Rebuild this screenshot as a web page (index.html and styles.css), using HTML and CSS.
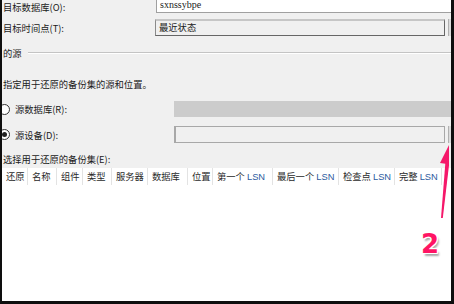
FILE: index.html
```html
<!DOCTYPE html>
<html lang="zh-CN">
  <head>
    <meta charset="UTF-8" />
    <meta name="viewport" content="width=device-width, initial-scale=1.0" />
    <title>还原数据库</title>
    <link rel="stylesheet" href="styles.css">
  </head>
  <body>
    <div class="window">
      <div class="field row-db">
        <span class="label">目标数据库(O):</span>
        <div class="input input-top">sxnssybpe</div>
      </div>
      <div class="field row-time">
        <span class="label">目标时间点(T):</span>
        <div class="input input-ro">最近状态</div>
        <div class="browse"></div>
      </div>

      <div class="group">
        <span class="group-title">的源</span>
        <span class="group-line"></span>
      </div>
      <div class="desc">指定用于还原的备份集的源和位置。</div>

      <div class="field row-src">
        <span class="radio"></span>
        <span class="label label-wide">源数据库(R):</span>
        <div class="input input-disabled"></div>
      </div>
      <div class="field row-dev">
        <span class="radio checked"></span>
        <span class="label label-wide">源设备(D):</span>
        <div class="input input-dev"></div>
        <div class="browse"></div>
      </div>

      <div class="desc pick">选择用于还原的备份集(E):</div>

      <div class="grid">
        <div class="grid-head">
          <span class="col" style="width: 26px">还原</span>
          <span class="col" style="width: 29px">名称</span>
          <span class="col" style="width: 26px">组件</span>
          <span class="col" style="width: 29px">类型</span>
          <span class="col" style="width: 36px">服务器</span>
          <span class="col" style="width: 40px">数据库</span>
          <span class="col" style="width: 25px">位置</span>
          <span class="col" style="width: 60px">第一个 <b class="lsn">LSN</b></span>
          <span class="col" style="width: 66px">最后一个 <b class="lsn">LSN</b></span>
          <span class="col" style="width: 56px">检查点 <b class="lsn">LSN</b></span>
          <span class="col" style="width: 47px">完整 <b class="lsn">LSN</b></span>
        </div>
      </div>

      <!-- annotation drawn over the dialog -->
      <svg class="arrow" width="449" height="301" viewBox="0 0 449 301">
        <polygon points="441,218 442.8,218 449.5,161 445.5,161" fill="#f5186a" />
        <polygon points="440,163 455,165 450,143" fill="#f5186a" />
      </svg>
      <span class="badge">2</span>
    </div>
  </body>
</html>
```

FILE: styles.css
```css
body {
  margin: 0;
  padding: 0;
  background-color: #0e0e0e;
  font-family: "Noto Sans CJK SC", "Noto Sans", sans-serif;
  font-size: 9.3px;
  color: #1a1a1a;
}
.window {
  position: relative;
  width: 449px;
  height: 301px;
  margin: 0 3px 3px 2px;
  padding-left: 1px;
  box-sizing: border-box;
  background-color: #f0f0f0;
  overflow: hidden;
}
.field {
  display: flex;
  align-items: center;
}
.label {
  width: 152px;
  flex: none;
  line-height: 14px;
}
.input {
  flex: 1;
  box-sizing: border-box;
  height: 100%;
  line-height: 14px;
  padding-left: 3px;
}
.row-db {
  height: 13px;
  margin-left: -1px;
  padding-left: 1px;
}
.input-top {
  margin-left: 1px;
  height: 13px;
  line-height: 9px;
  background-color: #fff;
  border-left: 1px solid #a0a0a0;
  border-bottom: 1px solid #a0a0a0;
  font-family: "Liberation Serif", serif;
  font-size: 10px;
}
.row-time {
  height: 17px;
  margin-top: 6px;
}
.input-ro {
  border-top: 2px solid #c6c6c6;
  border-left: 1px solid #8a8a8a;
  border-right: 1px solid #666;
  border-bottom: 1px solid #666;
  line-height: 13px;
}
.browse {
  width: 2px;
  height: 100%;
  margin-left: 3px;
  background-color: #dcdcdc;
  border-left: 1px solid #b0b0b0;
}
.group {
  display: flex;
  align-items: center;
  height: 14px;
  margin-top: 10px;
}
.group-title {
  line-height: 14px;
}
.group-line {
  flex: 1;
  margin-left: 6px;
  border-top: 1px solid #c4c4c4;
  border-bottom: 1px solid #fff;
}
.desc {
  height: 14px;
  line-height: 14px;
  margin-top: 17px;
}
.row-src {
  height: 16px;
  margin-top: 10px;
}
.input-disabled {
  background-color: #cccccc;
}
.row-dev {
  height: 17px;
  margin-top: 9px;
}
.input-dev {
  border: 1px solid #a8a8a8;
  border-left-width: 2px;
}
.radio {
  width: 11px;
  height: 11px;
  flex: none;
  box-sizing: border-box;
  margin-left: -4px;
  margin-right: 5px;
  border: 1px solid #333;
  border-radius: 50%;
  background-color: #fff;
  position: relative;
}
.radio.checked::after {
  content: "";
  position: absolute;
  left: 2px;
  top: 2px;
  width: 5px;
  height: 5px;
  border-radius: 50%;
  background-color: #222;
}
.label-wide {
  width: 159px;
}
.pick {
  margin-top: 9px;
}
.grid {
  margin-top: 2px;
  margin-left: -1px;
  height: 140px;
  background-color: #fff;
}
.grid-head {
  display: flex;
  height: 17px;
}
.col {
  flex: none;
  box-sizing: border-box;
  padding-left: 4px;
  line-height: 17px;
  border-right: 1px solid #e3e3e3;
  color: #2a2a2a;
  white-space: nowrap;
}
.lsn {
  font-family: "Liberation Sans", sans-serif;
  font-weight: normal;
  color: #2c5a9e;
}
.arrow {
  position: absolute;
  left: -2px;
  top: 0;
}
.badge {
  position: absolute;
  left: 419px;
  top: 229px;
  font-family: "DejaVu Sans", sans-serif;
  font-size: 26px;
  font-weight: bold;
  color: #ff1464;
  text-shadow: 1px 0 #fff, -1px 0 #fff, 0 1px #fff, 0 -1px #fff,
    1px 1px #fff, -1px -1px #fff, 1px -1px #fff, -1px 1px #fff,
    2px 3px 2px rgba(0, 0, 0, 0.35);
}
```
